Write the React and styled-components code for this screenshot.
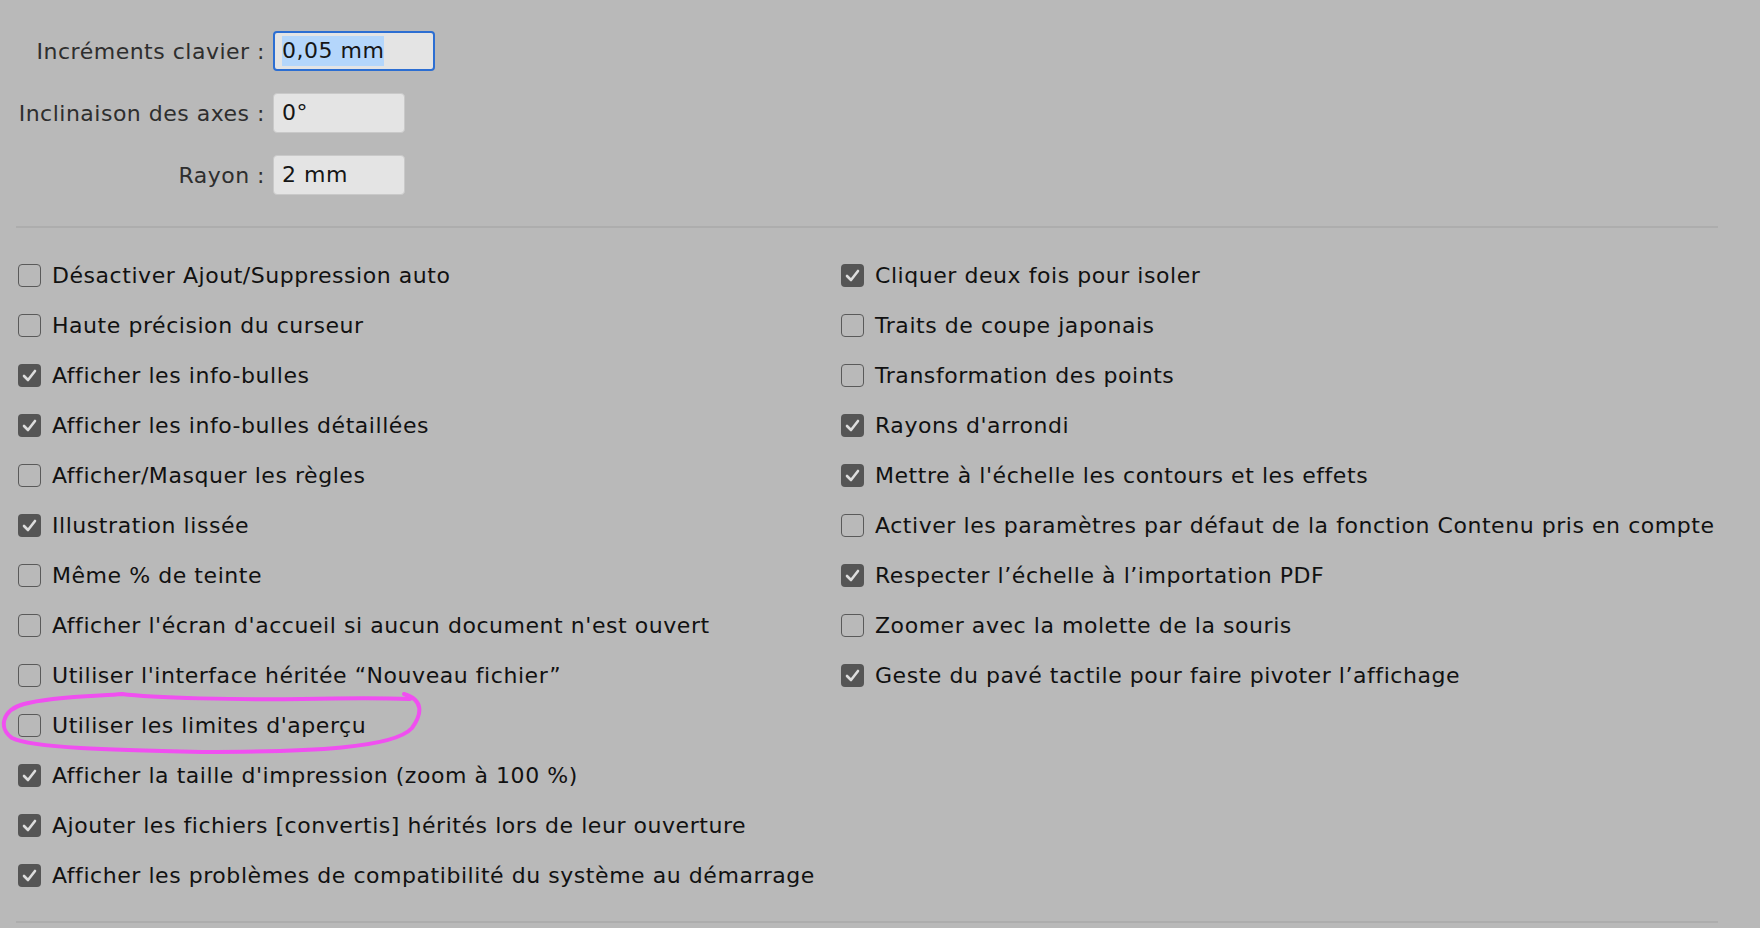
import React from "react";
import styled, { createGlobalStyle } from "styled-components";

const GlobalStyle = createGlobalStyle`
  html, body {
    margin: 0;
    padding: 0;
    background: #b9b9b9;
  }
  body {
    font-family: "DejaVu Sans", "Liberation Sans", sans-serif;
    -webkit-font-smoothing: antialiased;
  }
`;

const Page = styled.div`
  position: relative;
  width: 1760px;
  height: 928px;
  overflow: hidden;
  background: #b9b9b9;
  padding: 31px 42px 0 16px;
  box-sizing: border-box;
`;

const FieldGrid = styled.div`
  display: grid;
  grid-template-columns: 249px auto;
  column-gap: 8px;
  row-gap: 22px;
  align-items: center;
`;

const FieldLabel = styled.label`
  justify-self: end;
  font-size: 22px;
  letter-spacing: 0.5px;
  color: #2e2e2e;
  white-space: nowrap;
`;

const FieldBox = styled.div`
  box-sizing: border-box;
  width: ${(p) => p.w}px;
  height: 40px;
  display: flex;
  align-items: center;
  padding: 0 ${(p) => (p.focused ? 7 : 8)}px;
  background: #e4e4e4;
  border: ${(p) => (p.focused ? "2px solid #2c6ed2" : "1px solid #c9c9c9")};
  border-radius: 4px;
  font-size: 22px;
  letter-spacing: 0.5px;
  color: #161616;
  > span {
    background: ${(p) => (p.focused ? "#b4d6fb" : "transparent")};
    padding: 2px 0;
    line-height: 26px;
  }
`;

const Divider = styled.hr`
  border: none;
  height: 2px;
  background: #adadad;
  margin: ${(p) => p.m};
  width: 1702px;
`;

const Columns = styled.div`
  display: grid;
  grid-template-columns: 823px auto;
  padding-left: 2px;
`;

const Column = styled.div`
  display: flex;
  flex-direction: column;
`;

const Row = styled.div`
  position: relative;
  height: 50px;
  display: flex;
  align-items: center;
  gap: 11px;
  font-size: 22px;
  letter-spacing: 0.55px;
  color: #111;
  white-space: nowrap;
`;

const Box = styled.span`
  box-sizing: border-box;
  flex: none;
  width: 23px;
  height: 23px;
  border-radius: 4px;
  display: flex;
  align-items: center;
  justify-content: center;
  background: ${(p) => (p.checked ? "#555555" : "transparent")};
  border: ${(p) => (p.checked ? "none" : "1.5px solid #5a5a5a")};
`;

const Mark = styled.svg`
  position: absolute;
  left: -16px;
  top: -8px;
  pointer-events: none;
  overflow: visible;
`;

const left = [
  ["Désactiver Ajout/Suppression auto", false],
  ["Haute précision du curseur", false],
  ["Afficher les info-bulles", true],
  ["Afficher les info-bulles détaillées", true],
  ["Afficher/Masquer les règles", false],
  ["Illustration lissée", true],
  ["Même % de teinte", false],
  ["Afficher l'écran d'accueil si aucun document n'est ouvert", false],
  ["Utiliser l'interface héritée “Nouveau fichier”", false],
  ["Utiliser les limites d'aperçu", false, true],
  ["Afficher la taille d'impression (zoom à 100 %)", true],
  ["Ajouter les fichiers [convertis] hérités lors de leur ouverture", true],
  ["Afficher les problèmes de compatibilité du système au démarrage", true],
];

const right = [
  ["Cliquer deux fois pour isoler", true],
  ["Traits de coupe japonais", false],
  ["Transformation des points", false],
  ["Rayons d'arrondi", true],
  ["Mettre à l'échelle les contours et les effets", true],
  ["Activer les paramètres par défaut de la fonction Contenu pris en compte", false],
  ["Respecter l’échelle à l’importation PDF", true],
  ["Zoomer avec la molette de la souris", false],
  ["Geste du pavé tactile pour faire pivoter l’affichage", true],
];

const Check = ({ checked }) => (
  <Box checked={checked}>
    {checked && (
      <svg width="15" height="13" viewBox="0 0 15 13">
        <path
          d="M2 7 L6 11 L13 2"
          fill="none"
          stroke="#dcdcdc"
          strokeWidth="2.6"
          strokeLinecap="round"
          strokeLinejoin="round"
        />
      </svg>
    )}
  </Box>
);

const Option = ({ label, checked, marked }) => (
  <Row>
    <Check checked={checked} />
    {label}
    {marked && (
      <Mark width="420" height="64" viewBox="0 0 420 64">
        <path
          d="M402 2 C 422 8, 420 22, 410 36 C 392 56, 310 60, 200 60 C 110 58, 30 56, 10 46 C -4 36, 0 18, 22 12 C 50 4, 100 4, 120 2 C 150 6, 240 8, 300 7 C 350 6, 380 6, 408 7"
          fill="none"
          stroke="#f04ff0"
          strokeWidth="4"
          strokeLinecap="round"
        />
      </Mark>
    )}
  </Row>
);

const fields = [
  ["Incréments clavier :", "0,05 mm", 162, true],
  ["Inclinaison des axes :", "0°", 132, false],
  ["Rayon :", "2 mm", 132, false],
];

export default function App() {
  return (
    <>
      <GlobalStyle />
      <Page>
        <FieldGrid>
          {fields.map(([l, v, w, f]) => (
            <React.Fragment key={l}>
              <FieldLabel>{l}</FieldLabel>
              <FieldBox w={w} focused={f}>
                <span>{v}</span>
              </FieldBox>
            </React.Fragment>
          ))}
        </FieldGrid>
        <Divider m="31px 0 22px 0" />
        <Columns>
          <Column>
            {left.map(([l, c, m]) => (
              <Option key={l} label={l} checked={c} marked={m} />
            ))}
          </Column>
          <Column>
            {right.map(([l, c]) => (
              <Option key={l} label={l} checked={c} />
            ))}
          </Column>
        </Columns>
        <Divider m="21px 0 0 0" />
      </Page>
    </>
  );
}
